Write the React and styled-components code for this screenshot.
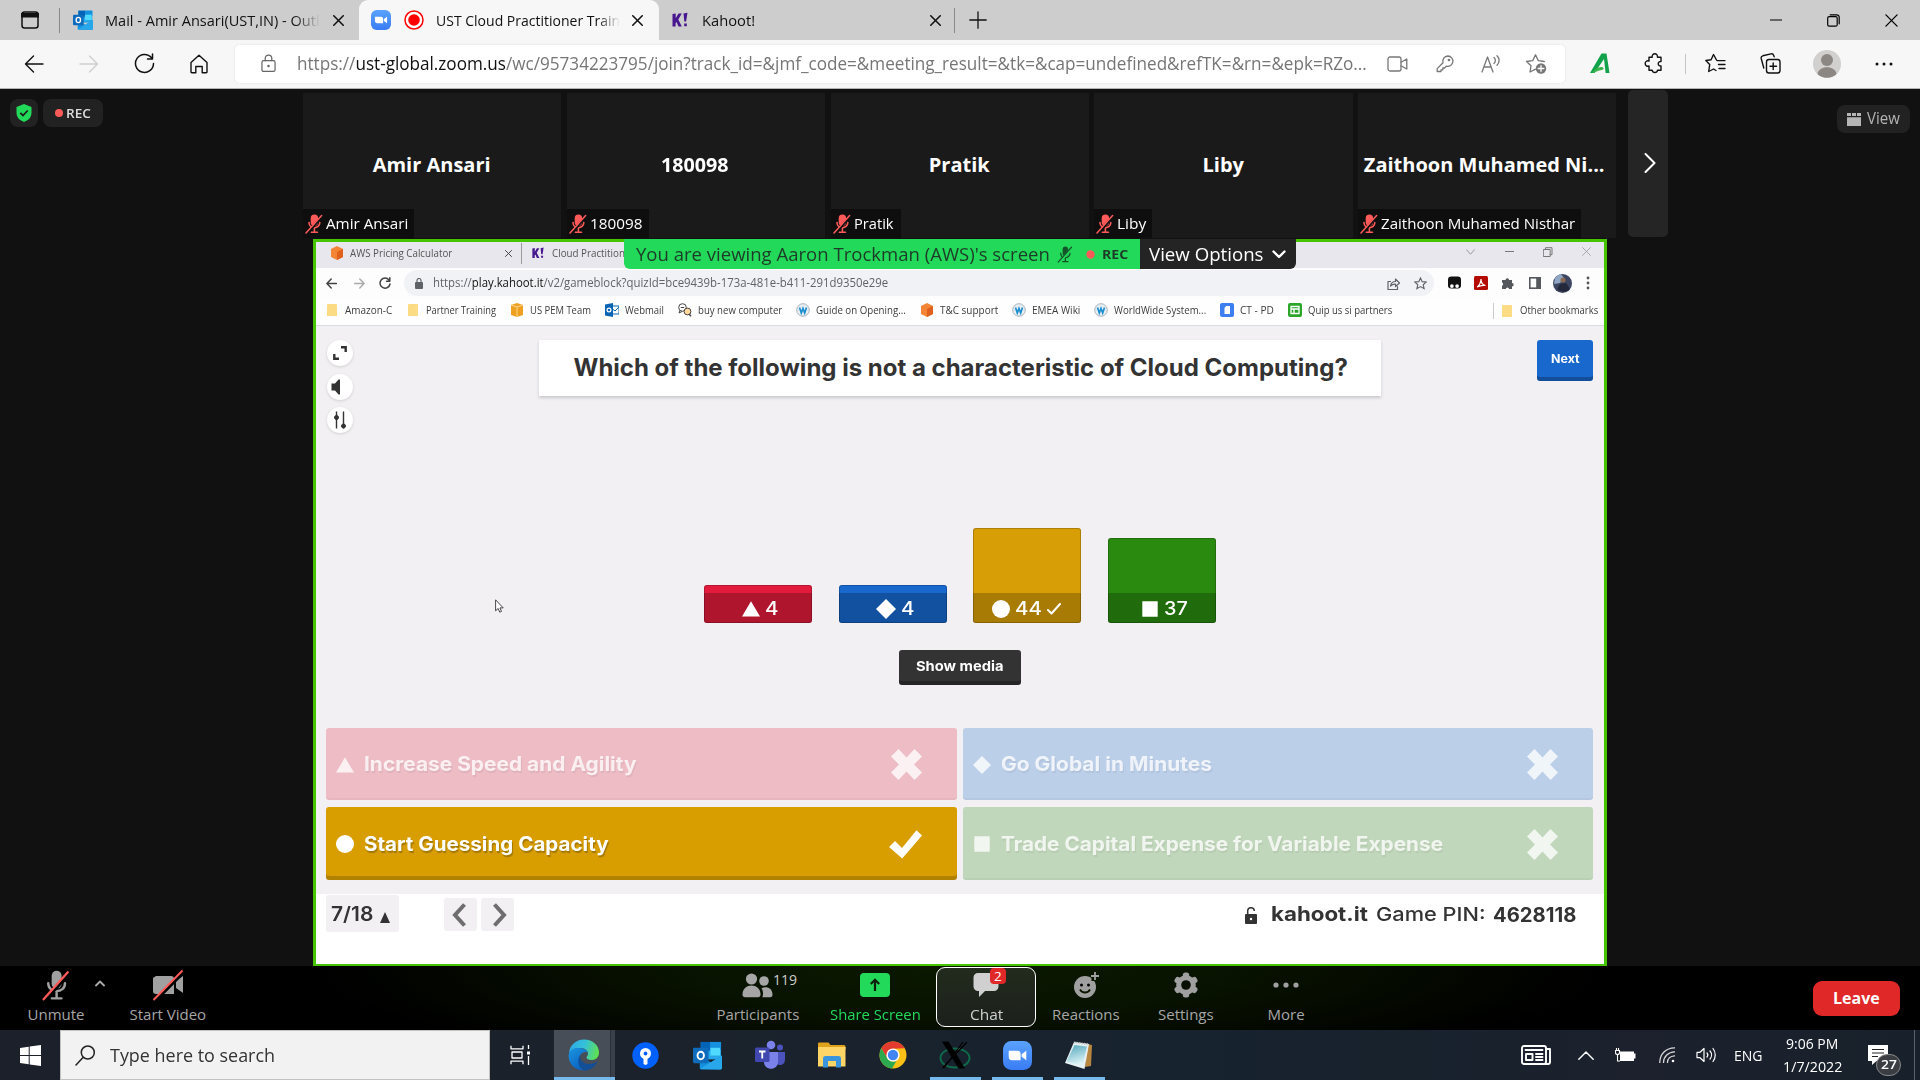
import React, { useLayoutEffect, useRef } from "react";
import styled, { createGlobalStyle, css } from "styled-components";

const GlobalStyle = createGlobalStyle`
  html, body { margin: 0; padding: 0; background: #111; overflow: hidden; }
  * { box-sizing: border-box; }
  svg { display: block; flex: none; }
`;

const ui = `"Open Sans", "Noto Sans", sans-serif`;
const quizFont = `Inter, "Open Sans", sans-serif`;

/* Single line of text condensed or widened to an exact width */
const FitBox = styled.span`
  display: block;
  flex: none;
  width: ${(p) => p.$w}px;
  margin-left: ${(p) => p.$ml || 0}px;
  margin-top: ${(p) => p.$mt || 0}px;
  font-family: ${(p) => p.$font || ui};
  font-size: ${(p) => p.$size || 14}px;
  font-weight: ${(p) => p.$weight || 400};
  color: ${(p) => p.$color || "inherit"};
  line-height: 1.36;
  text-align: left;
  ${(p) => p.$fade && css`
    mask-image: linear-gradient(90deg, #000 ${p.$fade}%, transparent 100%);
  `}
`;
const FitInner = styled.span`
  display: inline-block;
  white-space: pre;
  transform-origin: 0 50%;
`;
function Fit({ w, children, ...rest }) {
  const ref = useRef(null);
  useLayoutEffect(() => {
    const el = ref.current;
    el.style.transform = `scaleX(${w / el.offsetWidth})`;
  }, [w, children]);
  return (
    <FitBox $w={w} {...rest}>
      <FitInner ref={ref}>{children}</FitInner>
    </FitBox>
  );
}

const Slot = styled.div`
  flex: none;
  display: flex;
  align-items: center;
  justify-content: center;
  width: ${(p) => p.$w}px;
  margin-left: ${(p) => p.$ml || 0}px;
`;
const Spacer = styled.div`flex: 1;`;
const Divider = styled.div`
  flex: none;
  width: ${(p) => p.$w || 1}px;
  height: ${(p) => p.$h}px;
  margin-left: ${(p) => p.$ml || 0}px;
  background: ${(p) => p.$c || "#8a8a8a"};
`;

const Screen = styled.div`
  width: 1920px;
  height: 1080px;
  overflow: hidden;
  display: flex;
  flex-direction: column;
  background: #111;
  font-family: ${ui};
`;

/* ---------- shared drawings ---------- */
const Line = ({ s = 16, w, h, box = "0 0 16 16", sw = 1.2, c = "#222", cap = "round", join = "round", children }) => (
  <svg width={w || s} height={h || s} viewBox={box} fill="none" stroke={c} strokeWidth={sw} strokeLinecap={cap} strokeLinejoin={join}>
    {children}
  </svg>
);
const Cross = ({ s = 11, c = "#111", sw = 1.4 }) => (
  <Line s={s} box="0 0 10 10" c={c} sw={sw}><path d="M.7.7l8.6 8.6M9.3.7L.7 9.3" /></Line>
);
const Outlook = ({ s = 20 }) => (
  <svg width={s} height={s} viewBox="0 0 30 30">
    <rect x="8" y="1" width="21" height="18" fill="#28a8ea" />
    <rect x="8" y="1" width="10" height="9" fill="#0364b8" />
    <rect x="18" y="1" width="11" height="8" fill="#1490df" />
    <rect x="18" y="7" width="10" height="8" fill="#50d9ff" />
    <path d="M7 16l11.500 6L30 15v13a1.500 1.500 0 0 1-1.500 1.500H8.500A1.500 1.500 0 0 1 7 28z" fill="#1490df" />
    <path d="M7 29L30 15v13a1.500 1.500 0 0 1-1.500 1.500z" fill="#28a8ea" />
    <rect x="0" y="7" width="16" height="16" rx="1.500" fill="#0f6cbd" />
    <ellipse cx="8" cy="15" rx="3.300" ry="3.900" fill="none" stroke="#fff" strokeWidth="2" />
  </svg>
);
const ZoomLogo = ({ s = 20 }) => (
  <svg width={s} height={s} viewBox="0 0 28 28">
    <defs><linearGradient id="zm" x2="0" y2="1"><stop stopColor="#5aa2ff" /><stop offset="1" stopColor="#3a7cf4" /></linearGradient></defs>
    <rect width="28" height="28" rx="8" fill="url(#zm)" />
    <path d="M5.500 9.500h8.500a3 3 0 0 1 3 3v6H8.500a3 3 0 0 1-3-3z" fill="#fff" />
    <path d="M18 12.700l4.500-3.200v9L18 15.300z" fill="#fff" />
  </svg>
);
const KLogo = ({ s = 16 }) => (
  <svg width={s} height={s} viewBox="0 0 16 16" fill="#46178f">
    <path d="M.5 2l3.200-.6v4.800L6.500 1.500h3.300L6.300 7.500l3.500 7H6.500L4.500 10l-.9 1v3.500H.5z" />
    <path d="M11.500 1.500l4-.7-1.400 8.700h-1.800zM12.200 11.500h2.600v2.800h-2.600z" />
  </svg>
);
const MicOff = ({ w = 18, h = 20, c = "#ff5a5a", slash = "#ff5a5a", gap = "#111", body = 6.4, cut = 3.2 }) => (
  <svg width={w} height={h} viewBox="0 0 18 20" fill="none" strokeLinecap="round">
    <rect x={9.4 - body / 2} y=".5" width={body} height="11.500" rx={body / 2} fill={c} />
    <path d="M4 8.500c0 6.800 10.800 6.800 10.800 0M9.400 14v4M6.300 18.300h6.200" stroke={c} strokeWidth="1.600" />
    <path d="M1.700 19.700L17.300 2.300" stroke={gap} strokeWidth={cut} />
    <path d="M1 18.900L16.600 1.500" stroke={slash} strokeWidth="1.500" />
  </svg>
);

/* ---------- Edge browser ---------- */
const TabStrip = styled.div`
  flex: none;
  height: 40px;
  display: flex;
  align-items: center;
  background: #cdcdcd;
`;
const ActiveTab = styled.div`
  width: 300px;
  height: 40px;
  margin-left: 15px;
  display: flex;
  align-items: center;
  background: #f7f7f7;
  border-radius: 9px 9px 0 0;
`;
const Toolbar = styled.div`
  flex: none;
  height: 49px;
  display: flex;
  align-items: center;
  background: #f7f7f7;
  border-bottom: 1px solid #b4b4b4;
  padding-bottom: 1px;
`;
const AddressBar = styled.div`
  width: 1330px;
  height: 38px;
  margin-left: 24px;
  display: flex;
  align-items: center;
  background: #fff;
  border-radius: 5px;
  box-shadow: 0 0 3px rgba(0,0,0,.08);
  color: #767676;
`;
const Host = styled.span`color: #111;`;

function EdgeTabs() {
  return (
    <TabStrip>
      <Slot $w={20} $ml={20}>
        <Line s={18} box="0 0 18 18" c="#111" sw={1.500}><rect x="1" y="1" width="16" height="16" rx="2.500" /><path d="M1 3.500h16M1 5h16" strokeWidth="3" /></Line>
      </Slot>
      <Divider $h={25} $ml={19} />
      <Slot $w={20} $ml={13}><Outlook s={20} /></Slot>
      <Fit w={215} $ml={12} $size={15} $color="#111" $fade={88}>Mail - Amir Ansari(UST,IN) - Outl</Fit>
      <Slot $w={12} $ml={12}><Cross /></Slot>
      <ActiveTab>
        <Slot $w={20} $ml={12}><ZoomLogo s={20} /></Slot>
        <Slot $w={20} $ml={13}>
          <svg width="20" height="20" viewBox="0 0 20 20"><circle cx="10" cy="10" r="9" fill="#fff" stroke="#f00" strokeWidth="1.500" /><circle cx="10" cy="10" r="5.800" fill="#f00" /></svg>
        </Slot>
        <Fit w={184} $ml={12} $size={15} $color="#111" $fade={88}>UST Cloud Practitioner Train</Fit>
        <Slot $w={12} $ml={11}><Cross /></Slot>
      </ActiveTab>
      <Slot $w={16} $ml={13}><KLogo /></Slot>
      <Fit w={53} $ml={14} $size={15} $color="#111">Kahoot!</Fit>
      <Slot $w={12} $ml={174}><Cross /></Slot>
      <Divider $h={25} $ml={13} />
      <Slot $w={18} $ml={14}><Line s={18} box="0 0 18 18" c="#111" sw={1.300}><path d="M9 .8v16.400M.8 9h16.400" /></Line></Slot>
      <Spacer />
      <Slot $w={56}><Line s={12} box="0 0 12 12" c="#000" sw={1.100}><path d="M0 6h12" /></Line></Slot>
      <Slot $w={58}><Line s={13} box="0 0 13 13" c="#000" sw={1.200}><rect x=".7" y="2.700" width="9.500" height="9.500" rx="1.500" /><path d="M3.200.8h6.500a2.500 2.500 0 0 1 2.500 2.500v6.500" /></Line></Slot>
      <Slot $w={58}><Cross s={13} c="#000" sw={1} /></Slot>
    </TabStrip>
  );
}

function EdgeToolbar() {
  return (
    <Toolbar>
      <Slot $w={24} $ml={22}><Line s={20} box="0 0 20 20" c="#111" sw={1.400}><path d="M19 10H1.500M9.500 2L1.500 10l8 8" /></Line></Slot>
      <Slot $w={24} $ml={31}><Line s={20} box="0 0 20 20" c="#cfcfcf" sw={1.400}><path d="M1 10h17.500M10.500 2l8 8-8 8" /></Line></Slot>
      <Slot $w={24} $ml={31}><Line s={21} box="0 0 21 21" c="#111" sw={1.500}><path d="M17.500 4.800A9 9 0 1 0 19.500 10.500M18.500 1v5h-5" /></Line></Slot>
      <Slot $w={24} $ml={31}><Line s={20} box="0 0 20 20" c="#111" sw={1.400}><path d="M2 8.500L10 1.200l8 7.300V18a.8.8 0 0 1-.8.8h-4V12.500H6.800v6.300h-4A.8.8 0 0 1 2 18z" /></Line></Slot>
      <AddressBar>
        <Slot $w={18} $ml={24}><Line w={15} h={19} box="0 0 16 20" c="#666" sw={1.300}><rect x="1" y="7" width="14" height="11.500" rx="1.800" /><path d="M4.500 7V4.500a3.500 3.500 0 0 1 7 0V7" /><circle cx="8" cy="12.700" r=".7" fill="#666" /></Line></Slot>
        <Fit w={1070} $ml={20} $size={17.500}>https://<Host>ust-global.zoom.us</Host>/wc/95734223795/join?track_id=&amp;jmf_code=&amp;meeting_result=&amp;tk=&amp;cap=undefined&amp;refTK=&amp;rn=&amp;epk=RZo...</Fit>
        <Slot $w={24} $ml={18}><Line w={21} h={16} box="0 0 21 16" c="#777" sw={1.300}><rect x="1" y="1" width="13" height="14" rx="2" /><path d="M14 6.200L19.800 3v10L14 9.800" /></Line></Slot>
        <Slot $w={24} $ml={24}><Line s={18} box="0 0 18 18" c="#777" sw={1.300}><path d="M11.800 1a5.200 5.200 0 1 1-1.500 10.200L8.500 13H6.800v1.800H5v1.700H1.200v-2.900L7 7.700A5.200 5.200 0 0 1 11.800 1z" /><circle cx="13" cy="5" r=".7" /></Line></Slot>
        <Slot $w={24} $ml={22}><Line w={20} h={18} box="0 0 20 18" c="#777" sw={1.300}><path d="M1 17L6.500 2 12 17M3 12h7M13 2.500c1.800 1.500 1.800 4.500 0 6M16 .8c2.800 2.600 2.800 7 0 9.500" /></Line></Slot>
        <Slot $w={24} $ml={21}>
          <Line s={22} box="0 0 22 22" c="#777" sw={1.300}><path d="M10.500 16.200L5 19l1-6.200L1.500 8.500l6.200-.9 2.800-5.800 2.800 5.800 6 .9" /><circle cx="16" cy="15.500" r="5.200" fill="#777" stroke="none" /><path d="M16 12.700v5.600M13.200 15.500h5.600" stroke="#fff" /></Line>
        </Slot>
      </AddressBar>
      <Slot $w={24} $ml={23}>
        <svg width="20" height="21" viewBox="0 0 20 21"><path d="M0 20L11.500.5h5L19.500 20h-3.900L14 6 4.500 20z" fill="#12a24b" /><path d="M2 20c3.500-5 8-7 11-5.500 1 .5 1 1.700-.5 2.300-2.500.8-5 1-9.500 3.200z" fill="#3cb54a" /></svg>
      </Slot>
      <Slot $w={24} $ml={30}>
        <Line s={21} box="0 0 21 21" c="#111" sw={1.400}><path d="M5 4.200h3.200a2.700 2.700 0 1 1 5.200 0H17v4.300a2.300 2.300 0 1 0 0 4.500v4.300h-3.500a2.700 2.700 0 0 1-5.300 0H5v-4.300a2.700 2.700 0 1 1 0-4.900z" /></Line>
      </Slot>
      <Divider $h={20} $ml={19} $c="#c4c4c4" />
      <Slot $w={24} $ml={17}>
        <Line s={21} box="0 0 21 21" c="#111" sw={1.400}><path d="M12 7.600h8M13.500 11.500h6.500M14 15.500h6M11.500 7L8.500 1.500l-2.400 5.200-5.300.8L4.700 11.600l-1 6.900L8.500 16l2.500 1.500" /></Line>
      </Slot>
      <Slot $w={24} $ml={31}>
        <Line s={21} box="0 0 21 21" c="#111" sw={1.400}><rect x="6.500" y="6.500" width="13.500" height="13.500" rx="2.500" /><path d="M13.200 10v6.500M10 13.200h6.500M3.800 15L1.200 5.500A2.300 2.300 0 0 1 2.800 2.800L11 .9a2.300 2.300 0 0 1 2.700 1.500l.5 1.500" /></Line>
      </Slot>
      <Slot $w={28} $ml={31}>
        <svg width="28" height="28" viewBox="0 0 28 28"><circle cx="14" cy="14" r="14" fill="#d2d0ce" /><circle cx="14" cy="10" r="6" fill="#8d8784" /><path d="M4.500 24c1-9 18-9 19 0a14 14 0 0 1-19 0z" fill="#8d8784" /></svg>
      </Slot>
      <Slot $w={24} $ml={31}><svg width="18" height="4" viewBox="0 0 18 4" fill="#111"><circle cx="2" cy="2" r="1.500" /><circle cx="9" cy="2" r="1.500" /><circle cx="16" cy="2" r="1.500" /></svg></Slot>
    </Toolbar>
  );
}

/* ---------- Zoom meeting ---------- */
const Meeting = styled.div`
  flex: none;
  height: 877px;
  display: flex;
  flex-direction: column;
  background: #111;
`;
const Gallery = styled.div`
  flex: none;
  height: 150px;
  display: flex;
  align-items: flex-start;
`;
const Pill = styled.div`
  flex: none;
  height: ${(p) => p.$h || 28}px;
  width: ${(p) => p.$w}px;
  margin: ${(p) => p.$m};
  display: flex;
  align-items: center;
  justify-content: center;
  background: #222;
  border-radius: 8px;
  color: #ddd;
`;
const Tiles = styled.div`
  display: flex;
  gap: 5.500px;
  margin: 4px 0 0 200px;
`;
const Tile = styled.div`
  width: 258.300px;
  height: 145px;
  display: flex;
  flex-direction: column;
  align-items: center;
  justify-content: space-between;
  background: #1a1a1a;
  color: #fff;
`;
const TileLabel = styled.div`
  align-self: flex-start;
  height: 29px;
  width: ${(p) => p.$w}px;
  padding-left: 2px;
  display: flex;
  align-items: center;
  background: #0e0e0e;
`;
const NextArrow = styled.div`
  width: 40px;
  height: 147px;
  margin: 1px 0 0 12px;
  padding: 0 0 2px 4px;
  display: flex;
  align-items: center;
  justify-content: center;
  background: #252525;
  border-radius: 5px;
`;
const people = [
  { name: "Amir Ansari", nw: 118, lw: 82, box: 111 },
  { name: "180098", nw: 68, lw: 52, box: 82 },
  { name: "Pratik", nw: 61, lw: 40, box: 70 },
  { name: "Liby", nw: 41, lw: 29, box: 58 },
  { name: "Zaithoon Muhamed Ni...", label: "Zaithoon Muhamed Nisthar", nw: 241, lw: 194, box: 223, shift: -6 },
];

function GalleryRow() {
  return (
    <Gallery>
      <Pill $w={28} $m="10px 0 0 10px">
        <svg width="16" height="18" viewBox="0 0 16 18"><path d="M8 0l7.500 3v6c0 4.500-3.500 7.500-7.500 9C4 16.500.5 13.500.5 9V3z" fill="#23d959" /><path d="M4.300 8.800L7 11.500l4.700-5" fill="none" stroke="#1c1c1c" strokeWidth="1.800" /></svg>
      </Pill>
      <Pill $w={60} $m="10px 0 0 5px">
        <svg width="8" height="8"><circle cx="4" cy="4" r="4" fill="#ff5a5a" /></svg>
        <Fit w={25} $ml={3} $size={12.500} $weight={600}>REC</Fit>
      </Pill>
      <Tiles>
        {people.map((p) => (
          <Tile key={p.name}>
            <Fit w={p.nw} $size={20} $weight={700} $mt={58} $ml={p.shift || -1}>{p.name}</Fit>
            <TileLabel $w={p.box}>
              <MicOff w={18} h={20} body={7.4} cut={2.8} />
              <Fit w={p.lw} $ml={3} $size={15}>{p.label || p.name}</Fit>
            </TileLabel>
          </Tile>
        ))}
      </Tiles>
      <NextArrow>
        <Line w={12} h={20} box="0 0 12 20" c="#fff" sw={2}><path d="M1.500 1l9 9-9 9" /></Line>
      </NextArrow>
      <Spacer />
      <Pill $w={73} $h={28} $m="16px 10px 0 0">
        <svg width="14" height="13" viewBox="0 0 14 13" fill="#b5b5b5"><path d="M0 0h4v3H0zM5 0h4v3H5zM10 0h4v3h-4zM0 4.300h14V13H0z" /></svg>
        <Fit w={33} $ml={6} $size={15.500} $color="#b5b5b5">View</Fit>
      </Pill>
    </Gallery>
  );
}

/* ---------- Shared screen ---------- */
const Share = styled.div`
  position: relative;
  width: 1294px;
  height: 727px;
  margin-left: 313px;
  border: 3px solid #47c400;
  border-bottom-width: 2px;
  display: flex;
  flex-direction: column;
  background: #fff;
`;
const Banner = styled.div`
  position: absolute;
  top: -3px;
  left: 308px;
  height: 30px;
  display: flex;
  border-radius: 0 0 6px 6px;
  overflow: hidden;
`;
const BannerPart = styled.div`
  width: ${(p) => p.$w}px;
  height: 30px;
  display: flex;
  align-items: center;
  background: ${(p) => p.$bg};
  color: ${(p) => p.$c};
`;
const ChromeTabs = styled.div`
  flex: none;
  height: 26px;
  display: flex;
  align-items: center;
  background: #e8e7ed;
  padding-bottom: 4px;
`;
const WindowButtons = styled.div`
  display: flex;
  align-items: center;
  padding-bottom: 3px;
`;
const ChromeBar = styled.div`
  flex: none;
  height: 30px;
  display: flex;
  align-items: center;
  background: #fdfdfe;
`;
const Omnibox = styled.div`
  width: 1030px;
  height: 26px;
  margin-left: 13px;
  display: flex;
  align-items: center;
  background: #f1f2f6;
  border-radius: 13px;
  color: #5f6368;
`;
const Bookmarks = styled.div`
  flex: none;
  height: 28px;
  padding: 0 6px 2px 9px;
  display: flex;
  align-items: center;
  gap: 14px;
  background: #fefeff;
  border-bottom: 1px solid #dcdce0;
`;
const Bookmark = styled.div`
  display: flex;
  align-items: center;
  gap: 6px;
  color: #3c3c3c;
`;

const BmIcon = ({ kind }) => {
  const art = {
    folder: <path d="M3 1h8a1 1 0 0 1 1 1v11H2V2a1 1 0 0 1 1-1z" fill="#fbdc84" />,
    box: <><path d="M7 0l6 2v10l-6 2-6-2V2z" fill="#f0a021" /><path d="M1 2l6 2 6-2M7 4v10" stroke="#fbd68b" fill="none" /></>,
    cube: <><path d="M7 0l6 3v8l-6 3-6-3V3z" fill="#f58536" /><path d="M7 6l6-3v8l-6 3z" fill="#e0601d" /></>,
    outlook: <><rect x="5" y="3" width="9" height="8" fill="#fff" stroke="#0a64b4" /><path d="M5 4l5 4 4-4" stroke="#0a64b4" fill="none" /><path d="M0 1.500L8 0v14l-8-1.500z" fill="#0a64b4" /><circle cx="4" cy="7" r="1.900" fill="none" stroke="#fff" strokeWidth="1.200" /></>,
    chat: <><circle cx="4.500" cy="4.500" r="3.800" fill="#fff" stroke="#444" /><path d="M2.800 4.500h3.400M2 7.500L1 10l3-1.500" stroke="#444" fill="none" /><circle cx="9.500" cy="8.500" r="3.400" fill="#ffd9a0" stroke="#444" /><path d="M11 11l2 2.200" stroke="#444" strokeWidth="1.500" /></>,
    wiki: <><circle cx="7" cy="7" r="6.300" fill="#e8eef2" stroke="#a9b3ba" /><path d="M3.500 4.500l1.800 5.500L7 5.500 8.700 10l1.800-5.500" fill="none" stroke="#1b8fd0" strokeWidth="1.700" /></>,
    doc: <><rect x="0" y="0" width="14" height="14" rx="2" fill="#3d7ff0" /><path d="M6 3h4v8H4.500V5z" fill="#fff" /></>,
    quip: <><rect x="0" y="0" width="14" height="14" rx="2" fill="#2aa528" /><path d="M3 3.500h8v7H3zM3 6h8M6 6v4.500" fill="none" stroke="#fff" strokeWidth="1.300" /></>,
  };
  return <svg width="14" height="14" viewBox="0 0 14 14">{art[kind]}</svg>;
};
const bookmarks = [
  ["folder", "Amazon-C", 47], ["folder", "Partner Training", 70], ["box", "US PEM Team", 61], ["outlook", "Webmail", 39],
  ["chat", "buy new computer", 84], ["wiki", "Guide on Opening...", 90], ["cube", "T&C support", 58], ["wiki", "EMEA Wiki", 48],
  ["wiki", "WorldWide System...", 92], ["doc", "CT - PD", 34], ["quip", "Quip us si partners", 84],
];

function SharedBrowser() {
  return (
    <>
      <ChromeTabs>
        <Slot $w={14} $ml={14}><BmIcon kind="cube" /></Slot>
        <Fit w={102} $ml={6} $size={11} $color="#555">AWS Pricing Calculator</Fit>
        <Slot $w={8} $ml={52}><Cross s={7} c="#444" /></Slot>
        <Divider $h={21} $ml={9} $c="#999" />
        <Slot $w={12} $ml={10}><KLogo s={12} /></Slot>
        <Fit w={73} $ml={8} $size={11} $color="#555">Cloud Practition</Fit>
        <Spacer />
        <WindowButtons>
          <Slot $w={40}><Line w={9} h={6} box="0 0 9 6" c="#999" sw={1}><path d="M.5.7l4 4.500 4-4.500" /></Line></Slot>
          <Slot $w={39}><Line w={9} h={3} box="0 0 9 3" c="#777" sw={1}><path d="M0 1.500h9" /></Line></Slot>
          <Slot $w={38}><Line s={10} box="0 0 10 10" c="#777" sw={1}><path d="M.7 2.500h6.500v7H.7zM2.500 2.500V.7h6.500v7H7.200" /></Line></Slot>
          <Slot $w={39}><Cross s={9} c="#999" sw={0.900} /></Slot>
          <Slot $w={-2} $ml={-2} />
        </WindowButtons>
      </ChromeTabs>
      <ChromeBar>
        <Slot $w={12} $ml={9}><Line s={11} box="0 0 11 11" c="#444" sw={1.500}><path d="M10.500 5.500H1M5.200 1L.9 5.500 5.200 10" /></Line></Slot>
        <Slot $w={12} $ml={16}><Line s={11} box="0 0 11 11" c="#aaa" sw={1.400}><path d="M.5 5.500H10M5.800 1l4.300 4.500L5.800 10" /></Line></Slot>
        <Slot $w={12} $ml={14}><Line s={12} box="0 0 12 12" c="#444" sw={1.500}><path d="M10 3a5 5 0 1 0 1 4M10.800.8v3.400H7.500" /></Line></Slot>
        <Omnibox>
          <Slot $w={8} $ml={11}><svg width="8" height="11" viewBox="0 0 8 11"><rect y="4" width="8" height="7" rx="1" fill="#5f6368" /><path d="M2 4V2.500a2 2 0 0 1 4 0V4" fill="none" stroke="#5f6368" strokeWidth="1.200" /></svg></Slot>
          <Fit w={455} $ml={10} $size={12}>https://<Host>play.kahoot.it</Host>/v2/gameblock?quizId=bce9439b-173a-481e-b411-291d9350e29e</Fit>
          <Spacer />
          <Slot $w={14}><Line s={13} box="0 0 13 13" c="#5f6368" sw={1.200}><path d="M3.500 4.500H1v8h9.500V9.500M3.500 9c.5-3 2.500-4.500 5-4.500V2L12.500 6l-4 3.500V7.200C6.500 7 5 7.500 3.500 9z" /></Line></Slot>
          <Slot $w={14} $ml={13}><Line s={13} box="0 0 14 14" c="#5f6368" sw={1.200} join="miter"><path d="M7 1l1.800 4 4.400.4-3.300 2.900 1 4.300L7 10.300l-3.900 2.300 1-4.300L.8 5.400 5.200 5z" /></Line></Slot>
          <Slot $w={7} />
        </Omnibox>
        <Slot $w={14} $ml={13}><svg width="13" height="14" viewBox="0 0 14 14"><rect x="0" y="0" width="14" height="13" rx="3.500" fill="#111" /><circle cx="4.200" cy="10.300" r="2" fill="#fff" /><circle cx="9.800" cy="10.300" r="2" fill="#fff" /></svg></Slot>
        <Slot $w={14} $ml={13}><svg width="14" height="14" viewBox="0 0 14 14"><rect width="14" height="14" rx="1.500" fill="#b30b00" /><path d="M3 11c2-1 4-4.500 4-8 0 3.500 2 6 4.500 6.500C9 9 6 9.500 3 11z" fill="none" stroke="#fff" strokeWidth="1.200" /></svg></Slot>
        <Slot $w={14} $ml={13}><svg width="14" height="14" viewBox="0 0 14 14" fill="#55585c"><path d="M1 4h3.500a1.800 1.800 0 1 1 3.600 0H11v3a1.700 1.700 0 1 1 0 3.400V13H8a1.600 1.600 0 0 0-3.200 0H1v-3.200a1.700 1.700 0 0 0 0-3.200z" /></svg></Slot>
        <Slot $w={14} $ml={13}><svg width="12" height="12" viewBox="0 0 12 12"><rect x=".8" y=".8" width="10.400" height="10.400" fill="none" stroke="#55585c" strokeWidth="1.600" /><path d="M7.200 0H12v12H7.200z" fill="#55585c" /></svg></Slot>
        <Slot $w={19} $ml={11}><svg width="19" height="19" viewBox="0 0 19 19"><circle cx="9.500" cy="9.500" r="9.500" fill="#3d4660" /><path d="M2 4a9.500 9.500 0 0 1 6-4l3 4-4 5-6 1z" fill="#8fa7c4" /><circle cx="10" cy="6" r="2.600" fill="#8a6a55" /><path d="M4 15l3-5 6-1 4 6a9 9 0 0 1-13 0z" fill="#23283a" /></svg></Slot>
        <Slot $w={6} $ml={13}><svg width="4" height="14" viewBox="0 0 4 14" fill="#555"><circle cx="2" cy="2" r="1.400" /><circle cx="2" cy="7" r="1.400" /><circle cx="2" cy="12" r="1.400" /></svg></Slot>
      </ChromeBar>
      <Bookmarks>
        {bookmarks.map(([kind, text, w], i) => (
          <Bookmark key={i}><BmIcon kind={kind} /><Fit w={w} $size={11}>{text}</Fit></Bookmark>
        ))}
        <Spacer />
        <Bookmark><Divider $h={16} $c="#ccc" /><BmIcon kind="folder" /><Fit w={78} $size={11}>Other bookmarks</Fit></Bookmark>
      </Bookmarks>
    </>
  );
}

/* ---------- Kahoot quiz ---------- */
const Quiz = styled.div`
  flex: none;
  height: 568px;
  display: flex;
  flex-direction: column;
  align-items: center;
  background: #f2f0f3;
  font-family: ${quizFont};
`;
const QuizHead = styled.div`
  width: 100%;
  height: 108px;
  padding: 14px 11px 0 11px;
  display: flex;
  align-items: flex-start;
  justify-content: space-between;
`;
const RoundStack = styled.div`
  width: 56px;
  display: flex;
  flex-direction: column;
  gap: 7.500px;
`;
const RoundButton = styled.div`
  width: 26px;
  height: 26px;
  display: flex;
  align-items: center;
  justify-content: center;
  border-radius: 50%;
  background: #fff;
  box-shadow: 0 1px 3px rgba(0,0,0,.14);
`;
const Question = styled.div`
  width: 842px;
  height: 56px;
  display: flex;
  align-items: center;
  justify-content: center;
  background: #fff;
  color: #333;
  box-shadow: 0 2px 3px rgba(0,0,0,.17);
`;
const QuizButton = styled.div`
  width: ${(p) => p.$w}px;
  height: ${(p) => p.$h}px;
  margin-top: ${(p) => p.$mt || 0}px;
  padding-bottom: 3px;
  display: flex;
  align-items: center;
  justify-content: center;
  border-radius: 3px;
  background: ${(p) => p.$bg};
  box-shadow: inset 0 -4px rgba(0,0,0,.25);
  color: #fff;
`;
const Bars = styled.div`
  height: 189px;
  display: flex;
  align-items: flex-end;
  gap: 26.700px;
`;
const Bar = styled.div`
  width: 108px;
  height: ${(p) => p.$h}px;
  display: flex;
  flex-direction: column;
  justify-content: flex-end;
  border-radius: 3px;
  overflow: hidden;
  background: ${(p) => p.$bg};
  box-shadow: inset 0 0 0 1px rgba(0,0,0,.2);
`;
const BarFoot = styled.div`
  height: 30px;
  padding: 1px ${(p) => (p.$tick ? 2 : 0)}px 0 ${(p) => (p.$tick ? 0 : 4)}px;
  display: flex;
  align-items: center;
  justify-content: center;
  gap: 5px;
  background: rgba(0,0,0,.22);
  color: #fff;
`;
const Answers = styled.div`
  width: 100%;
  margin-top: 43px;
  padding: 0 11px 0 10px;
  display: grid;
  grid-template-columns: 1fr 1fr;
  grid-template-rows: 72px 73px;
  gap: 7px 6px;
`;
const Answer = styled.div`
  display: flex;
  align-items: center;
  padding: 1px 35px 0 10px;
  border-radius: 3px;
  background: ${(p) => p.$bg};
  box-shadow: inset 0 -${(p) => (p.$on ? 4 : 2)}px rgba(0,0,0,${(p) => (p.$on ? 0.18 : 0.03)});
  color: rgba(255,255,255,${(p) => (p.$on ? 1 : 0.78)});
  text-shadow: 1px 2px 1px rgba(0,0,0,${(p) => (p.$on ? 0.25 : 0.06)});
`;
const QuizFoot = styled.div`
  flex: 1;
  display: flex;
  align-items: flex-start;
  background: #fff;
  color: #333;
`;
const Chip = styled.div`
  width: ${(p) => p.$w}px;
  height: ${(p) => p.$h}px;
  margin: ${(p) => p.$m};
  padding: ${(p) => p.$p || 0};
  display: flex;
  align-items: center;
  justify-content: center;
  border-radius: 3px;
  background: #f2f0f3;
`;
const TriangleSlot = styled.div`
  margin: 5px 0 0 7px;
`;
const PinRow = styled.div`
  height: 42px;
  margin-right: 28px;
  display: flex;
  align-items: center;
`;
const Cursor = styled.div`
  position: absolute;
  left: 179px;
  top: 357px;
`;

const Shape = ({ kind, s = 18 }) => (
  <svg width={s} height={s} viewBox="0 0 18 18" fill="currentColor">
    {kind === "triangle" && <path d="M9 1.300l9 15.200H0z" />}
    {kind === "diamond" && <path d="M9 0l9 9-9 9-9-9z" />}
    {kind === "circle" && <circle cx="9" cy="9" r="9" />}
    {kind === "square" && <path d="M1.300 1.300h15.400v15.400H1.300z" />}
  </svg>
);
const Tick = () => (
  <svg width="33" height="30" viewBox="0 0 33 30" fill="currentColor"><path d="M0 18l6-6 7 7L27.500 1.200 33 6.500 13.200 29.500z" /></svg>
);
const BigX = () => (
  <svg width="31" height="31" viewBox="0 0 31 31" fill="currentColor"><path d="M7.500 0l8 8.500 8-8.500L31 7.500 23 15.500l8 8-7.500 7.500-8-8.500-8 8.500L0 23.500l8-8-8-8z" /></svg>
);

const bars = [
  { bg: "#e21b3c", h: 38, shape: "triangle", n: "4", w: 13 },
  { bg: "#1868ce", h: 38, shape: "diamond", n: "4", w: 13 },
  { bg: "#d79e06", h: 95, shape: "circle", n: "44", w: 27, tick: true },
  { bg: "#298a0f", h: 85, shape: "square", n: "37", w: 24 },
];
const answers = [
  { bg: "#edbcc5", shape: "triangle", text: "Increase Speed and Agility", w: 273 },
  { bg: "#bccfe9", shape: "diamond", text: "Go Global in Minutes", w: 211 },
  { bg: "#d89e00", shape: "circle", text: "Start Guessing Capacity", w: 245, on: true },
  { bg: "#c1d7bb", shape: "square", text: "Trade Capital Expense for Variable Expense", w: 442 },
];

function KahootQuiz() {
  return (
    <>
      <Quiz>
        <QuizHead>
          <RoundStack>
            <RoundButton><svg width="14" height="14" viewBox="0 0 14 14" fill="none" stroke="#333" strokeWidth="2.400"><path d="M8 1.300h4.700V6M1.300 8v4.700H6" /></svg></RoundButton>
            <RoundButton><svg width="18" height="16" viewBox="0 0 18 16" fill="#333"><path d="M.5 4.500h3.500L7.500.5H9v15H7.500L4 11.500H.5z" /></svg></RoundButton>
            <RoundButton><svg width="12" height="18" viewBox="0 0 12 18" fill="#333" stroke="#333"><path d="M2.500.5v17M9.500.5v17" strokeWidth="1.400" /><circle cx="2.500" cy="6.500" r="2" /><circle cx="9.500" cy="15" r="2" /></svg></RoundButton>
          </RoundStack>
          <Question><Fit w={774} $ml={1} $font={quizFont} $size={24} $weight={700}>Which of the following is not a characteristic of Cloud Computing?</Fit></Question>
          <QuizButton $w={56} $h={41} $bg="#1868ce"><Fit w={29} $font={quizFont} $size={12} $weight={700}>Next</Fit></QuizButton>
        </QuizHead>
        <Bars>
          {bars.map((b) => (
            <Bar key={b.shape} $h={b.h} $bg={b.bg}>
              <BarFoot $tick={b.tick}>
                <Shape kind={b.shape} s={b.shape === "diamond" ? 20 : 18} />
                <Fit w={b.w} $font={quizFont} $size={19} $weight={500}>{b.n}</Fit>
                {b.tick && <Line w={14} h={12} box="0 0 14 12" c="#fff" sw={2}><path d="M1 7l3.500 3.500L13 1" /></Line>}
              </BarFoot>
            </Bar>
          ))}
        </Bars>
        <QuizButton $w={122} $h={35} $mt={27} $bg="#333"><Fit w={87} $ml={-1} $mt={1} $font={quizFont} $size={13.500} $weight={700}>Show media</Fit></QuizButton>
        <Answers>
          {answers.map((a) => (
            <Answer key={a.shape} $bg={a.bg} $on={a.on}>
              <Shape kind={a.shape} />
              <Fit w={a.w} $ml={10} $mt={1} $font={quizFont} $size={20} $weight={700}>{a.text}</Fit>
              <Spacer />
              {a.on ? <Tick /> : <BigX />}
            </Answer>
          ))}
        </Answers>
      </Quiz>
      <QuizFoot>
        <Chip $w={73} $h={37} $m="1px 0 0 10px" $p="2px 5px 0 0">
          <Fit w={42} $font={quizFont} $size={19.500} $weight={600}>7/18</Fit>
          <TriangleSlot><svg width="10" height="11" viewBox="0 0 10 11"><path d="M5 0L10 11H0z" fill="#333" /></svg></TriangleSlot>
        </Chip>
        <Chip $w={33} $h={33} $m="4px 0 0 45px" $p="0 4px 0 0"><Line w={14} h={24} box="0 0 14 24" c="#6e6e6e" sw={4} cap="butt" join="miter"><path d="M12.500 1.500L3 12l9.500 10.500" /></Line></Chip>
        <Chip $w={33} $h={33} $m="4px 0 0 4px" $p="0 0 0 4px"><Line w={14} h={24} box="0 0 14 24" c="#6e6e6e" sw={4} cap="butt" join="miter"><path d="M1.500 1.500L11 12 1.500 22.500" /></Line></Chip>
        <Spacer />
        <PinRow>
          <svg width="12" height="17" viewBox="0 0 12 17"><rect y="7" width="12" height="10" rx="1" fill="#333" /><path d="M2.700 7V4a3.300 3.300 0 0 1 6.600 0" fill="none" stroke="#333" strokeWidth="1.500" /><circle cx="6" cy="12" r="1.200" fill="#fff" /></svg>
          <Fit w={97} $ml={14} $font={quizFont} $size={20} $weight={700}>kahoot.it</Fit>
          <Fit w={110} $ml={8} $font={quizFont} $size={19} $weight={500}>Game PIN:</Fit>
          <Fit w={83} $ml={7} $font={quizFont} $size={19.500} $weight={700}>4628118</Fit>
        </PinRow>
      </QuizFoot>
      <Cursor>
        <svg width="9" height="14" viewBox="0 0 9 14"><path d="M.6.8v11l2.500-2.300 1.700 3.700 1.700-.8-1.600-3.500h3.300z" fill="#fff" stroke="#333" strokeWidth=".9" /></svg>
      </Cursor>
    </>
  );
}

/* ---------- Zoom controls ---------- */
const ZoomBar = styled.div`
  flex: none;
  height: 64px;
  display: flex;
  background: radial-gradient(ellipse 640px 110px at 50% 0, #0b1900 0%, #081200 45%, #000 100%);
`;
const Control = styled.div`
  position: relative;
  flex: none;
  width: ${(p) => p.$w}px;
  height: ${(p) => (p.$boxed ? 60 : 62)}px;
  margin: ${(p) => (p.$boxed ? 1 : 0)}px 0 0 ${(p) => p.$ml || 0}px;
  padding-top: 4px;
  display: flex;
  flex-direction: column;
  align-items: center;
  color: ${(p) => p.$c || "#a6a6a6"};
  ${(p) => p.$boxed && css`
    border: 1px solid #fff;
    border-radius: 9px;
    background: linear-gradient(#222b1d, #1c201c);
    padding-top: 2px;
  `}
`;
const ControlIcon = styled.div`
  height: 30px;
  display: flex;
  align-items: center;
  justify-content: center;
  gap: 1px;
`;
const Caret = styled.div`
  flex: none;
  width: 10px;
  margin: 14px 0 0 -1px;
`;
const Badge = styled.div`
  position: absolute;
  left: 53px;
  top: 0;
  width: 16px;
  height: 16px;
  display: flex;
  justify-content: center;
  align-items: center;
  border-radius: 4px;
  background: #e02828;
  color: #fff;
`;
const Count = styled.div`margin-bottom: 11px;`;
const Leave = styled.div`
  width: 87px;
  height: 35px;
  margin: 15px 20px 0 0;
  display: flex;
  align-items: center;
  justify-content: center;
  border-radius: 9px;
  background: #e02828;
  color: #fff;
`;

function Controls() {
  return (
    <ZoomBar>
      <Control $w={80} $ml={16}>
        <ControlIcon><MicOff w={30} h={31} c="#a0a0a0" slash="#ff5a5a" gap="#000" cut={2.4} /></ControlIcon>
        <Fit w={57} $size={15} $mt={4}>Unmute</Fit>
      </Control>
      <Caret><Line w={10} h={7} box="0 0 10 7" c="#aaa" sw={1.800}><path d="M1 5.500l4-4 4 4" /></Line></Caret>
      <Control $w={90} $ml={18}>
        <ControlIcon><svg width="32" height="31" viewBox="0 0 32 31"><path d="M4 6h15a3 3 0 0 1 3 3v15H4a3 3 0 0 1-3-3V8zM24 11l7-5v17l-7-5z" fill="#a0a0a0" /><path d="M3 31L32 1.500" stroke="#000" strokeWidth="3.500" /><path d="M1.500 30L30.500.5" stroke="#ff5a5a" strokeWidth="2" /></svg></ControlIcon>
        <Fit w={77} $size={15} $mt={4}>Start Video</Fit>
      </Control>
      <Control $w={118} $ml={486}>
        <ControlIcon>
          <Slot $w={30} $ml={23}><svg width="31" height="25" viewBox="0 0 31 25" fill="currentColor"><circle cx="9.500" cy="6" r="5.600" /><path d="M.5 21.500c0-12 18-12 18 0 0 2-1 2.700-2.500 2.700H3C1.500 24.200.5 23.500.5 21.500z" /><circle cx="22" cy="8" r="4.800" /><path d="M20.300 24.200h7.700c1.500 0 2.500-.8 2.500-2.500 0-6.500-6-8.700-11-6.500 1.800 2.500 2 6.500.8 9z" /></svg></Slot>
          <Count><Fit w={24} $size={14} $color="#ccc">119</Fit></Count>
        </ControlIcon>
        <Fit w={83} $size={15} $mt={4}>Participants</Fit>
      </Control>
      <Control $w={116} $c="#23d959">
        <ControlIcon><svg width="30" height="24" viewBox="0 0 30 24"><rect width="30" height="24" rx="4" fill="#23d959" /><path d="M15 18V7M10.800 11L15 6.800l4.200 4.200" fill="none" stroke="#0a1f08" strokeWidth="2.200" /></svg></ControlIcon>
        <Fit w={91} $size={15} $mt={4}>Share Screen</Fit>
      </Control>
      <Control $w={100} $ml={3} $boxed $c="#d0d0d0">
        <ControlIcon><svg width="26" height="24" viewBox="0 0 26 24" fill="currentColor"><path d="M5 0h16a4.500 4.500 0 0 1 4.500 4.500v9A4.500 4.500 0 0 1 21 18H12l-6 6v-6H5A4.500 4.500 0 0 1 .5 13.500v-9A4.500 4.500 0 0 1 5 0z" /></svg></ControlIcon>
        <Fit w={33} $size={15} $mt={4}>Chat</Fit>
        <Badge><Fit w={8} $size={13.500}>2</Fit></Badge>
      </Control>
      <Control $w={100}>
        <ControlIcon><svg width="28" height="28" viewBox="0 0 28 28"><circle cx="13" cy="16" r="11" fill="#a0a0a0" /><path d="M19.500 0h8v10h-8z" fill="#0a1500" /><circle cx="9.500" cy="14" r="1.500" /><circle cx="16.500" cy="14" r="1.500" /><path d="M8 18.500c2 4 8 4 10 0" fill="none" stroke="#0a1500" strokeWidth="1.800" /><path d="M23 1v8M19 5h8" stroke="#a0a0a0" strokeWidth="1.800" /></svg></ControlIcon>
        <Fit w={68} $size={15} $mt={4}>Reactions</Fit>
      </Control>
      <Control $w={100}>
        <ControlIcon><svg width="26" height="26" viewBox="0 0 26 26"><g fill="#a0a0a0"><circle cx="13" cy="13" r="9.800" />{[0, 60, 120, 180, 240, 300].map((a) => <rect key={a} x="9.800" y="0.500" width="6.400" height="8" rx="2.500" transform={`rotate(${a} 13 13)`} />)}</g><circle cx="13" cy="13" r="4.800" fill="#081000" /></svg></ControlIcon>
        <Fit w={56} $size={15} $mt={4}>Settings</Fit>
      </Control>
      <Control $w={100}>
        <ControlIcon><svg width="26" height="6" viewBox="0 0 26 6" fill="#a0a0a0"><circle cx="3" cy="3" r="2.600" /><circle cx="13" cy="3" r="2.600" /><circle cx="23" cy="3" r="2.600" /></svg></ControlIcon>
        <Fit w={37} $size={15} $mt={4}>More</Fit>
      </Control>
      <Spacer />
      <Leave><Fit w={47} $size={16} $weight={700}>Leave</Fit></Leave>
    </ZoomBar>
  );
}

/* ---------- Windows taskbar ---------- */
const Taskbar = styled.div`
  flex: none;
  height: 50px;
  display: flex;
  align-items: stretch;
  background: linear-gradient(90deg, #1b202a 0%, #1b222c 35%, #17232f 60%, #17222d 72%, #1c212d 85%, #18212b 100%);
  color: #fff;
`;
const Search = styled.div`
  width: 430px;
  display: flex;
  align-items: center;
  background: #f2f2f2;
  border: 1px solid #c2c2c2;
  color: #333;
`;
const AppButton = styled.div`
  flex: none;
  width: 61.900px;
  padding-right: 2px;
  display: flex;
  align-items: center;
  justify-content: center;
  ${(p) => p.$open && css`
    background: linear-gradient(#76b9ed, #76b9ed) 5px bottom / 51px 3px no-repeat;
  `}
  ${(p) => p.$active && css`
    background: linear-gradient(#76b9ed, #76b9ed) 0 bottom / 61px 3px no-repeat, linear-gradient(90deg, #484e58 0 56px, #2b313b 56px 57px, #3a404a 57px 61px, transparent 61px);
  `}
`;
const DateBox = styled.div`
  flex: none;
  width: 60px;
  margin-left: 19px;
  padding-top: 4px;
  display: flex;
  flex-direction: column;
  align-items: center;
`;
const Notice = styled.div`
  position: relative;
  width: 24px;
  height: 50px;
  margin-left: 26px;
  padding-top: 15px;
`;
const NoticeCount = styled.div`
  position: absolute;
  left: 8px;
  top: 24px;
  width: 25px;
  height: 22px;
  display: flex;
  align-items: center;
  justify-content: center;
  border-radius: 11px;
  border: 1px solid #888;
  background: #3a3d42;
`;

const EdgeLogo = () => (
  <svg width="32" height="32" viewBox="0 0 32 32">
    <defs>
      <linearGradient id="e1" x1="0" x2="1" y1=".3" y2=".5"><stop stopColor="#2fa9e8" /><stop offset=".5" stopColor="#35c1d8" /><stop offset="1" stopColor="#5fe150" /></linearGradient>
      <linearGradient id="e2" x2=".6" y2="1"><stop stopColor="#1b95e0" /><stop offset="1" stopColor="#0b62c0" /></linearGradient>
    </defs>
    <path d="M1 14C2 5 9 .5 16 .5c9 0 15 6 15 13 0 5-3.500 7.500-7.500 7.500-3.500 0-5-1.500-5-2.500s1.500-1.500 1.500-4-3-5.500-7.500-5.500C7 9 3 11 1 14z" fill="url(#e1)" />
    <path d="M.6 17C.6 11 5.500 8.500 12 9c4.500.3 7.500 2.500 8 5-1-1.500-6.500-1.500-8 3-1.500 5 2.500 11 7 14C9 33 .6 26 .6 17z" fill="url(#e2)" />
    <path d="M12.500 15.500c-1.500 5 2.500 9.500 8.500 9.500 4 0 6.500-1.500 8.500-2.500C27 28 21.500 32 16 31.500 10 29 8.500 20 12.500 15.500z" fill="#134f96" />
  </svg>
);

function WindowsBar() {
  return (
    <Taskbar>
      <Slot $w={60}><svg width="21" height="21" viewBox="0 0 21 21" fill="#fff"><path d="M0 3l8.700-1.200V10H0zM9.700 1.600L21 0v10H9.700zM0 11h8.700v8.200L0 18zM9.700 11H21v10l-11.300-1.600z" /></svg></Slot>
      <Search>
        <Slot $w={22} $ml={13}><Line s={21} box="0 0 21 21" c="#222" sw={1.500}><circle cx="12.800" cy="7.500" r="6.500" /><path d="M8 12.500L1 20" /></Line></Slot>
        <Fit w={165} $ml={14} $mt={1} $size={17.500}>Type here to search</Fit>
      </Search>
      <Slot $w={60}>
        <Line w={21} h={20} box="0 0 21 20" c="#fff" sw={1.300}><path d="M1 .8v3h12v-3M1 19.200v-3h12v3M2 7h10v6H2zM18.500 0v4M18.500 11v9" strokeLinecap="butt" /><path d="M17 6.500h3v3h-3z" fill="#fff" stroke="none" /></Line>
      </Slot>
      <Slot $w={4} />
      <AppButton $active><EdgeLogo /></AppButton>
      <AppButton><svg width="27" height="27" viewBox="0 0 27 27"><circle cx="13.500" cy="13.500" r="13.200" fill="#0061fe" /><circle cx="13.500" cy="11.500" r="5.500" fill="#fff" /><path d="M11.500 15h4v7l-2 1-2-1z" fill="#fff" /><circle cx="13.500" cy="11.500" r="1.900" fill="#0061fe" /></svg></AppButton>
      <AppButton><Outlook s={29} /></AppButton>
      <AppButton>
        <svg width="30" height="30" viewBox="0 -1 30 30"><circle cx="25" cy="6.500" r="3" fill="#4b53bc" /><path d="M20 11h10v8a5 5 0 0 1-8 4z" fill="#4b53bc" /><circle cx="16" cy="4" r="4.300" fill="#7b83eb" /><path d="M9 11h14v10c0 9-14 9-14 0z" fill="#7b83eb" /><rect y="6.500" width="14.500" height="14.500" rx="1.500" fill="#4048b0" /><path d="M4 10.500h6.500M7.250 10.500v7" stroke="#fff" strokeWidth="1.800" /></svg>
      </AppButton>
      <AppButton>
        <svg width="28" height="26" viewBox="0 0 28 26"><path d="M0 1.500A1 1 0 0 1 1 .5h9.500l2 2.500H26a1.500 1.500 0 0 1 1.500 1.500V8H0z" fill="#e0a21a" /><path d="M0 5h27.500v19.500H0z" fill="#ffd567" /><path d="M5 25.500v-9a2.500 2.500 0 0 1 2.500-2.500h13a2.500 2.500 0 0 1 2.500 2.500v9h-5V19h-8v6.500z" fill="#3b95dc" /></svg>
      </AppButton>
      <AppButton>
        <svg width="28" height="28" viewBox="0 0 28 28"><circle cx="14" cy="14" r="13.500" fill="#fbc116" /><path d="M2.300 7.200A13.500 13.500 0 0 1 25.700 7.200L14 7.800 8.300 17.500z" fill="#e33b2e" /><path d="M2.300 7.200L8.300 17.300c2 3.300 5.500 4 9 3L13 27.500A13.500 13.500 0 0 1 2.300 7.200z" fill="#2da94f" /><circle cx="14" cy="14" r="6.600" fill="#fff" /><circle cx="14" cy="14" r="5.200" fill="#4285f4" /></svg>
      </AppButton>
      <AppButton $open>
        <svg width="32" height="28" viewBox="0 0 32 28"><ellipse cx="16" cy="17" rx="14.500" ry="9.500" fill="none" stroke="#0d6b4a" strokeWidth="2" /><path d="M3 .5h6.500L26 27.500h-6.500z" fill="#000" /><path d="M28 1L3.500 27M24 1L5 27" stroke="#000" strokeWidth="1.200" /></svg>
      </AppButton>
      <AppButton $open><ZoomLogo s={29} /></AppButton>
      <AppButton $open>
        <svg width="30" height="28" viewBox="0 0 30 28"><defs><linearGradient id="np" x2=".3" y2="1"><stop stopColor="#4fa6bb" /><stop offset="1" stopColor="#dff4f7" /></linearGradient></defs><path d="M23 3l5 1-1 21-6 1z" fill="#b8863f" /><path d="M10 1l15 2-4.500 25L1 22z" fill="#e8f2f4" /><path d="M10.500 4l12.500 1.500L18.500 25 2.500 20.500z" fill="url(#np)" /><path d="M10 1.500l15 2" stroke="#ccc" strokeWidth="2" strokeDasharray="1.500 1" /></svg>
      </AppButton>
      <Spacer />
      <Slot $w={30}><Line w={30} h={20} box="0 0 30 20" c="#fff" sw={1.900}><rect x="1" y="1" width="24" height="18" rx="2" /><path d="M25 4h4v13a2 2 0 0 1-2 2h-3M4.500 5h17M15 9h6.500M15 12h6.500M15 15h6.500" /><path d="M5 9h6.500v6H5z" /></Line></Slot>
      <Slot $w={16} $ml={27}><Line w={16} h={9} box="0 0 16 9" c="#fff" sw={1.400}><path d="M.8 8.300L8 1l7.200 7.300" /></Line></Slot>
      <Slot $w={21} $ml={21}><svg width="21" height="14" viewBox="0 0 21 14"><path d="M5 3.500h14v2h1.500v5H19v2.500H5z" fill="#fff" /><path d="M.5 2.500h4v2c0 1.300-.8 2-2 2s-2-.7-2-2zM1.500 0v2.500M3.500 0v2.500M2.500 6.500v6.500H5" fill="none" stroke="#fff" strokeWidth="1.100" /></svg></Slot>
      <Slot $w={16} $ml={23}><Line s={16} box="0 0 16 16" c="#d8d8d8" sw={1.300}><path d="M.8 15.500C.8 7 7 1 15.500.8M4.500 15.500c0-6 5-10.500 11-10.700M8.500 15.500c0-3.800 3-6.500 7-6.700" /><circle cx="14" cy="14" r="1.300" fill="#fff" stroke="none" /></Line></Slot>
      <Slot $w={21} $ml={21}><Line w={21} h={16} box="0 0 21 16" c="#fff" sw={1.200}><path d="M1 5.300h3L8 1.500v13L4 10.700H1zM11 6c1 1.200 1 2.800 0 4M14 4c2 2.300 2 5.700 0 8M17 1.500c3 3.800 3 9.200 0 13" /></Line></Slot>
      <Fit w={29} $ml={17} $mt={15} $size={15}>ENG</Fit>
      <DateBox>
        <Fit w={52} $size={14.500}>9:06 PM</Fit>
        <Fit w={59} $size={14.500} $mt={3}>1/7/2022</Fit>
      </DateBox>
      <Notice>
        <svg width="20" height="20" viewBox="0 0 20 20"><path d="M0 0h20v16H8.500L4 20v-4H0z" fill="#fff" /><path d="M4 4.500h12M4 8h12M4 11.500h6" stroke="#222" strokeWidth="1.100" /></svg>
        <NoticeCount><Fit w={16} $size={13} $weight={600}>27</Fit></NoticeCount>
      </Notice>
      <Divider $h={50} $ml={22} $c="#5c6068" />
      <Slot $w={5} />
    </Taskbar>
  );
}

export default function App() {
  return (
    <Screen>
      <GlobalStyle />
      <EdgeTabs />
      <EdgeToolbar />
      <Meeting>
        <GalleryRow />
        <Share>
          <SharedBrowser />
          <KahootQuiz />
          <Banner>
            <BannerPart $w={516} $bg="#23d959" $c="#1d3b28">
              <Fit w={414} $ml={12} $size={18.500}>You are viewing Aaron Trockman (AWS)'s screen</Fit>
              <Slot $w={17} $ml={6}><MicOff w={16} h={17} c="#14552a" slash="#14552a" gap="#23d959" /></Slot>
              <Slot $w={9} $ml={13}><svg width="9" height="9"><circle cx="4.500" cy="4.500" r="4.200" fill="#ff5a5a" /></svg></Slot>
              <Fit w={26} $ml={7} $size={12.500} $weight={700}>REC</Fit>
            </BannerPart>
            <BannerPart $w={156} $bg="#242424" $c="#fff">
              <Fit w={115} $ml={9} $size={18.500}>View Options</Fit>
              <Slot $w={15} $ml={7}><Line w={14} h={9} box="0 0 14 9" c="#fff" sw={2.400}><path d="M1.500 1.500L7 7l5.500-5.500" /></Line></Slot>
            </BannerPart>
          </Banner>
        </Share>
      </Meeting>
      <Controls />
      <WindowsBar />
    </Screen>
  );
}
